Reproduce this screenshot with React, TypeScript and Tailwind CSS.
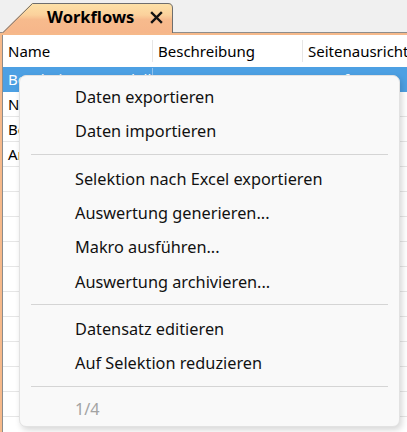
import React from 'react'

const menuGroups: string[][] = [
  ['Daten exportieren', 'Daten importieren'],
  ['Selektion nach Excel exportieren', 'Auswertung generieren...', 'Makro ausführen...', 'Auswertung archivieren...'],
  ['Datensatz editieren', 'Auf Selektion reduzieren'],
]

const rows = [
  { name: 'Bearbeitungsmodell', desc: '', orient: 'Querformat', selected: true },
  { name: 'Neue Auswertung', desc: '', orient: 'Hochformat', selected: false },
  { name: 'Berichtsvorlage', desc: '', orient: 'Hochformat', selected: false },
  { name: 'Archiv', desc: '', orient: 'Querformat', selected: false },
  ...Array.from({ length: 11 }, () => ({ name: '', desc: '', orient: '', selected: false })),
]

function Tab() {
  return (
    <div className="relative z-10 -mb-px ml-[2px] flex h-[31px] w-[171px] items-center">
      <svg className="absolute inset-0" width="171" height="31" viewBox="0 0 171 31">
        <defs>
          <linearGradient id="tabfill" x1="0" y1="0" x2="0" y2="1">
            <stop offset="0" stopColor="#fde2a8" />
            <stop offset="0.4" stopColor="#fbd19c" />
            <stop offset="0.55" stopColor="#f7bb8d" />
            <stop offset="1" stopColor="#f6b68a" />
          </linearGradient>
        </defs>
        <path d="M0 31 L30 1 L166 1 Q170 1 170 5 L170 31 Z" fill="url(#tabfill)" />
        <path d="M0.5 31 L30.5 1.5 L166 1.5 Q170.5 1.5 170.5 6 L170.5 31" fill="none" stroke="#6e6e6e" strokeWidth="1" />
      </svg>
      <span className="relative ml-[45px] w-[103px] text-[16.5px] font-bold leading-none text-black">Workflows</span>
      <svg className="relative" width="13" height="13" viewBox="0 0 13 13">
        <path d="M2 2 L11 11 M11 2 L2 11" stroke="#111" strokeWidth="2.4" strokeLinecap="square" />
      </svg>
    </div>
  )
}

function Cell({ children, selected, last }: { children?: React.ReactNode; selected?: boolean; last?: boolean }) {
  return (
    <div
      className={`overflow-hidden whitespace-nowrap pl-[5px] ${last ? '' : 'border-r'} ${
        selected ? 'border-[#93c3ee] text-white' : 'border-[#e6e6e6] text-black'
      }`}
    >
      {children}
    </div>
  )
}

function ContextMenu() {
  return (
    <div className="absolute left-[19px] top-[75px] w-[381px] rounded-[7px] border border-[#e2e2e2] bg-[#f9f9f9] pt-[4px] shadow-[2px_3px_6px_rgba(0,0,0,0.16)]">
      {menuGroups.map((group, gi) => (
        <div key={gi}>
          {group.map((label) => (
            <div key={label} className="flex h-[34.33px] items-center pl-[55px] text-[16.3px] text-[#111]">
              {label}
            </div>
          ))}
          <div className="mx-[11px] mb-[7px] mt-[5px] h-px bg-[#d5d5d5]" />
        </div>
      ))}
      <div className="flex h-[32px] items-center pl-[55px] text-[16.3px] text-[#a3a3a3]">1/4</div>
    </div>
  )
}

export default function App() {
  return (
    <div className="relative h-[432px] w-[407px] overflow-hidden bg-[#f0f0f0] font-['Noto_Sans',sans-serif]">
      <div className="flex h-[32px] items-end">
        <Tab />
      </div>

      <div className="h-[400px] border-t border-[#8c8c8c] bg-[#f6b98a] pl-[2px] pt-[2px]">
        <div className="h-full border-l border-[#8c8c8c] bg-white">
          {/* header */}
          <div className="grid h-[32px] grid-cols-[150px_150px_1fr] items-center text-[15px]">
            <Cell>Name</Cell>
            <Cell>Beschreibung</Cell>
            <Cell last>Seitenausrichtung</Cell>
          </div>

          {rows.map((r, i) => (
            <div
              key={i}
              className={`grid h-[25px] grid-cols-[150px_150px_1fr] items-center border-b text-[15px] ${
                r.selected ? 'border-[#4da0e3] bg-[#4da0e3]' : 'border-[#e6e6e6] bg-white'
              }`}
            >
              <Cell selected={r.selected}>{r.name}</Cell>
              <Cell selected={r.selected}>{r.desc}</Cell>
              <Cell selected={r.selected} last>
                {r.orient}
              </Cell>
            </div>
          ))}
        </div>
      </div>

      <ContextMenu />
    </div>
  )
}
